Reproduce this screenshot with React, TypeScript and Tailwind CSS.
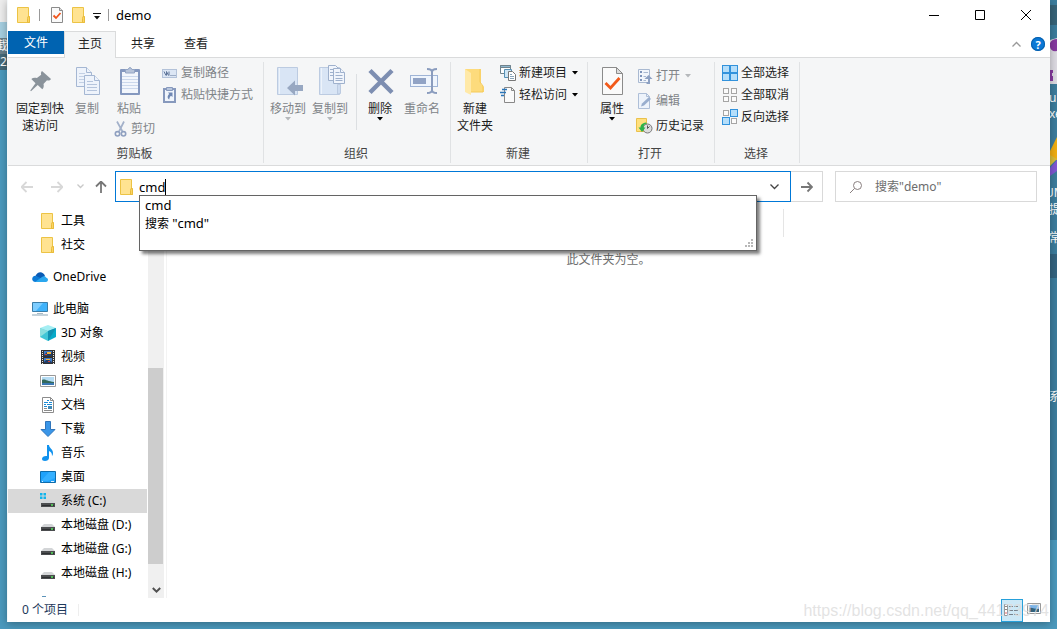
import type { ReactNode } from "react";

/* ---------- shared icons ---------- */

function Caret({ className = "fill-black" }: { className?: string }) {
  return (
    <svg width="6" height="4" viewBox="0 0 6 4" className={`shrink-0 ${className}`} aria-hidden="true">
      <path d="M0 0h6L3 3.5z" />
    </svg>
  );
}

function FolderIcon() {
  return (
    <svg width="16" height="16" viewBox="0 0 16 16" className="shrink-0" aria-hidden="true">
      <path d="M1.500.5h11v9l1 .5v5.500h-12z" fill="#ffe391" stroke="#ecc344" />
      <path d="M12 9.500h1.500v6h-2v-4z" fill="#fbd562" stroke="#e9bb3b" />
    </svg>
  );
}

function PropertiesIcon({ size = "large" }: { size?: "large" | "small" }) {
  if (size === "small") {
    return (
      <svg width="16" height="16" viewBox="0 0 16 16" aria-hidden="true">
        <path d="M2.500.5h8l3 3v12h-11z" fill="#fafafa" stroke="#8b8b8b" />
        <path d="M10.500.5v3h3" fill="#ddd" stroke="#8b8b8b" />
        <path d="m4.500 8.500 2.500 2.500 4.500-5" fill="none" stroke="#f0551c" strokeWidth="1.800" />
      </svg>
    );
  }
  return (
    <svg width="32" height="32" viewBox="0 0 32 32" aria-hidden="true">
      <path d="M6.500 1.500h14l6 6v21h-20z" fill="#fafafa" stroke="#8b8b8b" />
      <path d="M20.500 1.500v6h6z" fill="#dcdcdc" stroke="#8b8b8b" />
      <path d="m9.500 17 5 5 9-10" fill="none" stroke="#f25a1b" strokeWidth="2.800" />
    </svg>
  );
}

/* ---------- ribbon icons ---------- */

function PinIcon() {
  return (
    <svg width="32" height="32" viewBox="0 0 32 32" aria-hidden="true">
      <path d="M18 5 27 13c-1 1.500-2.500 1.800-4 1.300l-3.500 3.600c.6 2.300.2 4-1.200 5.300l-4.600-4.300L7 25.200 6.300 24.500l5.200-7.300-4.200-4.300c1.500-1.300 3.600-1.500 5.600-.9l4.300-3.200C16.700 7.300 17 6 18 5z" fill="#8a939b" />
    </svg>
  );
}

function CopyIcon() {
  return (
    <svg width="32" height="32" viewBox="0 0 32 32" aria-hidden="true">
      <g fill="#eef3fb" stroke="#a5b7d3">
        <path d="M5.500 1.500h10l5 5v14h-15z" />
        <path d="M15.500 1.500v5h5" />
        <path d="M8 7.500h6M8 10.500h10M8 13.500h10M8 16.500h6" stroke="#c3d0e4" />
        <path d="M13.500 9.500h10l5 5v14h-15z" />
        <path d="M23.500 9.500v5h5" />
        <path d="M16 15.500h6M16 18.500h10M16 21.500h10M16 24.500h10" stroke="#b5c4dc" />
      </g>
    </svg>
  );
}

function PasteIcon() {
  return (
    <svg width="32" height="32" viewBox="0 0 32 32" aria-hidden="true">
      <rect x="7" y="3" width="20" height="26" rx="1" fill="#8498bf" />
      <rect x="9" y="6" width="16" height="21" fill="#f2f6fc" />
      <path d="M12.500 7V3.500H15q2-4 4 0h2.500V7z" fill="#b7c4da" stroke="#92a4c4" />
      <path d="M9 10.500h16M9 13.500h16M9 16.500h16M9 19.500h16M9 22.500h16" stroke="#cbd8ec" />
    </svg>
  );
}

function CutIcon() {
  return (
    <svg width="14" height="16" viewBox="0 0 14 16" aria-hidden="true">
      <path d="m3 .5 5.500 10M10 .5l-5 10" stroke="#a3b1ca" strokeWidth="1.700" fill="none" />
      <circle cx="3.500" cy="12.800" r="2.200" fill="none" stroke="#8fa0c0" strokeWidth="1.600" />
      <circle cx="9.500" cy="12.800" r="2.200" fill="none" stroke="#8fa0c0" strokeWidth="1.600" />
    </svg>
  );
}

function PathIcon() {
  return (
    <svg width="16" height="16" viewBox="0 0 16 16" aria-hidden="true">
      <rect x=".5" y="4.500" width="14" height="8" fill="#dce6f4" stroke="#b3c2d9" />
      <path d="m2 6.500 2 4M4.500 6.500l2 4M4.500 6.500v4M7 6.500v4" fill="none" stroke="#5f7599" />
      <path d="M8.500 10.500h1M10.500 10.500h1M12.500 10.500h1" stroke="#5f7599" />
    </svg>
  );
}

function ShortcutIcon() {
  return (
    <svg width="16" height="16" viewBox="0 0 16 16" aria-hidden="true">
      <rect x="2" y="2" width="11" height="13" fill="#f0f5fc" stroke="#8799bd" strokeWidth="2" />
      <path d="M4.500.5h6v3h-6z" fill="#b8c6dd" stroke="#8799bd" />
      <path d="M6 5.500h4.500V10L9 8.800C7.800 9.800 7.300 11 7.300 12.500 4.800 11 5.500 8.500 7.300 7z" fill="#6f87b3" />
    </svg>
  );
}

function MoveToIcon() {
  return (
    <svg width="32" height="32" viewBox="0 0 32 32" aria-hidden="true">
      <path d="M5.500 1.500h20v27h-20z" fill="#d9e5f5" stroke="#bccbe1" />
      <path d="M7.500 2v26" stroke="#edf3fb" />
      <path d="m15 22 8-7.500V19h8v6h-8v4.500z" fill="#98a8c2" />
    </svg>
  );
}

function CopyToIcon() {
  return (
    <svg width="32" height="32" viewBox="0 0 32 32" className="overflow-visible" aria-hidden="true">
      <path d="M5.500 1.500h20v27h-20z" fill="#d9e5f5" stroke="#bccbe1" />
      <path d="M7.500 2v26" stroke="#edf3fb" />
      <path d="M23.500 28V18.500h3v9z" fill="#cedcf0" stroke="#bccbe1" />
      <g fill="#f1f5fc" stroke="#9fb1cd">
        <path d="M14.500-.5h7l3 3v12h-10z" />
        <path d="M16 3.500h4M16 6.500h4M16 9.500h4" />
        <path d="M19.500 2.500h7l4 4v11h-11z" />
        <path d="M26.500 2.500v4h4M21.500 6.500h4M21.500 9.500h7M21.500 12.500h7M21.500 14.500h7" />
      </g>
    </svg>
  );
}

function DeleteIcon() {
  return (
    <svg width="32" height="32" viewBox="0 0 32 32" aria-hidden="true">
      <path d="m6 4.500 22 22M28 4.500l-22 22" stroke="#7d8eb1" strokeWidth="4.500" />
    </svg>
  );
}

function RenameIcon() {
  return (
    <svg width="32" height="32" viewBox="0 0 32 32" aria-hidden="true">
      <rect x="4.500" y="9.500" width="27" height="11" fill="#eff5fd" stroke="#9fb4d6" />
      <rect x="7" y="12" width="13" height="6" fill="#91a3c5" />
      <path d="M21 3q5 0 5 3v18q0 3-5 3M31 3q-5 0-5 3v18q0 3 5 3" fill="none" stroke="#8a9cbe" strokeWidth="2" />
    </svg>
  );
}

function NewFolderIcon() {
  return (
    <svg width="32" height="32" viewBox="0 0 32 32" aria-hidden="true">
      <path d="M6 3h16v15l3 3v5H6z" fill="#fddb7c" />
      <path d="m6 3 6 4v22l-6-3z" fill="#ffe9a8" />
      <path d="M21 3v13l3 4v6H12" fill="none" stroke="#f5ca59" />
    </svg>
  );
}

function NewItemIcon() {
  return (
    <svg width="16" height="16" viewBox="0 0 16 16" aria-hidden="true">
      <path d="M.5.5h10v8H.5z" fill="#fff" stroke="#71838d" />
      <path d="M.5.5h10v2H.5z" fill="#8eb8d0" stroke="#71838d" />
      <path d="M4.500 4.500h7v8h-7z" fill="#cfe6f5" stroke="#5690b5" />
      <path d="M8.500 6.500h4l3 3v6h-7z" fill="#fff" stroke="#777" />
      <path d="M10 9.500h2M10 11.500h4M10 13.500h4" stroke="#88a5bb" />
    </svg>
  );
}

function EasyAccessIcon() {
  return (
    <svg width="16" height="16" viewBox="0 0 16 16" aria-hidden="true">
      <path d="M4.500.5h7l3 3v12h-10z" fill="#fafafa" stroke="#888" />
      <path d="M11.500.5v3h3" fill="none" stroke="#888" />
      <path d="M2 2.500h5M0 5.500h6M1 8.500h3" stroke="#2b76b9" strokeWidth="1.500" />
    </svg>
  );
}

function OpenIcon() {
  return (
    <svg width="16" height="16" viewBox="0 0 16 16" aria-hidden="true">
      <path d="M1.500 1.500h11v13h-11z" fill="#f2f6fc" stroke="#a9b9d1" />
      <path d="M3 3h2v2H3zM3 7h2v2H3zM3 11h2v2H3z" fill="#7f95bb" />
      <path d="M6.500 4.500H11M6.500 8.500H9M6.500 12.500H9" stroke="#a9b9d1" />
      <path d="m11.500 7 4 4H13v5H9.500v-2H11v-3H7.500z" fill="#8da1c3" />
    </svg>
  );
}

function EditIcon() {
  return (
    <svg width="16" height="16" viewBox="0 0 16 16" aria-hidden="true">
      <path d="M1.500.5h8l3 3v12h-11z" fill="#edf3fb" stroke="#aebfd8" />
      <path d="M9.500.5v3h3" fill="none" stroke="#aebfd8" />
      <path d="m4 13.500 1-3L12 4l2 2-7 6.500z" fill="#99aece" />
    </svg>
  );
}

function HistoryIcon() {
  return (
    <svg width="16" height="16" viewBox="0 0 16 16" className="overflow-visible" aria-hidden="true">
      <path d="M-.5.5h10v13h-10z" fill="#ffe07d" stroke="#eac14c" />
      <circle cx="10.500" cy="10.500" r="4.500" fill="#ddd" stroke="#777" />
      <path d="M10.500 7.500v3l2-2" fill="none" stroke="#555" />
      <path d="M9 4.500C5 5 3.500 7 3.500 9.500H1.500l3.500 4.500 3.500-4.500H6.500c0-2.500 1-3.500 3.500-4z" fill="#2bb34a" />
    </svg>
  );
}

function SelectIcon({ cells }: { cells: boolean[] }) {
  const spots = [
    [0, 0],
    [8, 0],
    [0, 8],
    [8, 8],
  ];
  return (
    <svg width="16" height="16" viewBox="0 0 16 16" aria-hidden="true">
      {spots.map(([x, y], i) =>
        cells[i] ? (
          <rect key={i} x={x + 0.5} y={y + 0.5} width="7" height="7" fill="#b5defa" stroke="#3292dc" />
        ) : (
          <rect key={i} x={x + 1.5} y={y + 1.5} width="5" height="5" fill="#fbfbfb" stroke="#a5a5a5" />
        ),
      )}
    </svg>
  );
}

/* ---------- tree icons ---------- */

function CloudIcon() {
  return (
    <svg width="16" height="16" viewBox="0 0 16 16" aria-hidden="true">
      <path d="M3.500 7C5 2.500 11 1.500 13 7l-4 4z" fill="#0a5bb5" />
      <path d="M3.500 13C-1 13-.8 7 3.500 6.800L11 10l-4 3z" fill="#0d7ad6" />
      <path d="M3 13 10 8c1.500-1.300 3.500-.8 4 .5 3 .8 2.300 4.500 0 4.500z" fill="#2aa7ee" />
    </svg>
  );
}

function ComputerIcon() {
  return (
    <svg width="16" height="16" viewBox="0 0 16 16" aria-hidden="true">
      <path d="M.5 1.500h15v9H.5z" fill="#3fb2fa" stroke="#3a7da8" />
      <path d="M1 2h10L4 10H1z" fill="#7dcdff" />
      <path d="M5 12.500h6" stroke="#a9bac5" />
      <path d="M0 14h16" stroke="#8ba6b6" />
    </svg>
  );
}

function CubeIcon() {
  return (
    <svg width="16" height="16" viewBox="0 0 16 16" aria-hidden="true">
      <path d="M0 3 8 0l8 3-8 3z" fill="#a5eef3" />
      <path d="m0 3 8 3v10l-8-4z" fill="#41c6d6" />
      <path d="m0 3 8 3-8 6z" fill="#8adfdf" />
      <path d="m16 3-8 3v10l8-4z" fill="#08aac9" />
      <path d="m16 3-8 3v10z" fill="#1192b2" />
    </svg>
  );
}

function VideoIcon() {
  return (
    <svg width="16" height="16" viewBox="0 0 16 16" aria-hidden="true">
      <path d="M1 1h14v14H1z" fill="#333" />
      <path d="M2.500 2v13M13.500 2v13" stroke="#e8e8e8" strokeDasharray="1 1" />
      <path d="M4 2h8v5H4zM4 9h8v5H4z" fill="#3f7cca" />
      <path d="m4 6 3-3 2 2 3-2v4H4zM4 13l3-3 5 3v1H4z" fill="#223d66" />
      <path d="M7 3h4v2H7zM6 10h4v1H6z" fill="#f3b33d" />
      <path d="M5 5h2v1H5zM8 12h2v1H8z" fill="#d9483b" />
    </svg>
  );
}

function PictureIcon() {
  return (
    <svg width="16" height="16" viewBox="0 0 16 16" aria-hidden="true">
      <path d="M.5 2.500h15v11H.5z" fill="#fff" stroke="#989898" />
      <path d="M2 4h12v8H2z" fill="#b5dcf4" />
      <path d="M2 7c3-1.500 5 1.500 12 2v1H2z" fill="#33695c" />
      <path d="M2 10h12v2H2z" fill="#3b78b4" />
    </svg>
  );
}

function DocumentIcon() {
  return (
    <svg width="16" height="16" viewBox="0 0 16 16" aria-hidden="true">
      <path d="M2.500.5h8l3 3v12h-11z" fill="#fff" stroke="#8c8c8c" />
      <path d="M10.500.5v3h3" fill="none" stroke="#8c8c8c" />
      <path d="M7 3.500h2M4 5.500h4M9 5.500h3M4 7.500h2M7 7.500h5M4 9.500h3" stroke="#1a8ad6" />
      <path d="M8 9h4v3H8z" fill="#3f87b5" />
      <path d="M4 11.500h3M4 13.500h8" stroke="#8c8c8c" />
    </svg>
  );
}

function DownloadIcon() {
  return (
    <svg width="16" height="16" viewBox="0 0 16 16" aria-hidden="true">
      <path d="M5.500.5h5v8h4.500L8 15.500 1 8.500h4.500z" fill="#3a96e8" stroke="#2f75bb" />
    </svg>
  );
}

function MusicIcon() {
  return (
    <svg width="16" height="16" viewBox="0 0 16 16" aria-hidden="true">
      <path d="M7 0h2c0 3 4 4 4 8 0 1.500-.5 2.500-1 3 0-3-1-4-3-5v7c0 2-2 3-4 3s-3-1-3-2.300C2 12 4.500 10.500 7 11z" fill="#1192ee" />
    </svg>
  );
}

function DesktopIcon() {
  return (
    <svg width="16" height="16" viewBox="0 0 16 16" aria-hidden="true">
      <path d="M.5 2.500h15v11H.5z" fill="#1fa2fb" stroke="#0e6cab" />
      <path d="m9 3 6 0v6L8 12H1z" fill="#35b0ff" />
      <path d="M2 12.500h1M11 12.500h3" stroke="#d9f0ff" />
    </svg>
  );
}

function DriveIcon({ system = false }: { system?: boolean }) {
  return (
    <svg width="16" height="16" viewBox="0 0 16 16" aria-hidden="true">
      {system && <path d="M0 0h2.500v2.500H0zM3.500 0H6v2.500H3.500zM0 3.500h2.500V6H0zM3.500 3.500H6V6H3.500z" fill="#10b4ec" />}
      <path d="M4 7h8l3 3H1z" fill="#d3d5d7" />
      <path d="M1 10h14v4H1z" fill="#4b4d4f" />
      <path d="M2 12h12v1H2z" fill="#2e3032" />
      <path d="M11 12h2" stroke="#56e35c" strokeWidth="1.500" />
    </svg>
  );
}

/* ---------- ribbon building blocks ---------- */

function RibbonGroup({ label, width, children }: { label: string; width: string; children: ReactNode }) {
  return (
    <section aria-label={label} className={`flex shrink-0 flex-col pt-1 ${width}`}>
      <div className="flex flex-1 flex-col border-r border-[#e0e2e4]">
        <div className="flex h-[83px] items-start">{children}</div>
        <div className="pr-0.5 text-center leading-[18px] text-[#444]">{label}</div>
      </div>
    </section>
  );
}

type BigProps = { icon: ReactNode; lines: string[]; width: string; muted?: boolean; menu?: boolean };

function BigButton({ icon, lines, width, muted, menu }: BigProps) {
  return (
    <button
      type="button"
      className={`flex shrink-0 flex-col items-center pt-1 leading-[17px] whitespace-nowrap ${width} ${muted ? "text-[#808488]" : "text-[#1c1c1c]"}`}
    >
      {icon}
      <span className="pt-0.5">
        {lines.map((line) => (
          <span key={line} className="block">
            {line}
          </span>
        ))}
      </span>
      {menu && <Caret className={muted ? "fill-[#b5b8bb]" : "fill-black"} />}
    </button>
  );
}

type SmallProps = { icon: ReactNode; label: string; muted?: boolean; menu?: boolean; tall?: boolean };

function SmallButton({ icon, label, muted, menu, tall }: SmallProps) {
  return (
    <button
      type="button"
      className={`flex items-center gap-[3px] whitespace-nowrap ${tall ? "h-[25px]" : "h-[22px]"} ${muted ? "text-[#808488]" : "text-[#1c1c1c]"}`}
    >
      {icon}
      <span>{label}</span>
      {menu && (
        <span className="pl-0.5">
          <Caret className={muted ? "fill-[#b5b8bb]" : "fill-black"} />
        </span>
      )}
    </button>
  );
}

function Ribbon() {
  return (
    <div className="flex h-[109px] border-y border-[#dadbdc] bg-[#f5f6f7] pb-0.5">
      <RibbonGroup label="剪贴板" width="w-64">
        <BigButton icon={<PinIcon />} lines={["固定到快", "速访问"]} width="ml-1.5 w-[52px]" />
        <BigButton icon={<CopyIcon />} lines={["复制"]} width="w-[42px]" muted />
        <div className="flex w-12 flex-col">
          <BigButton icon={<PasteIcon />} lines={["粘贴"]} width="w-[42px]" muted />
          <div className="pt-px pl-1.5">
            <SmallButton icon={<CutIcon />} label="剪切" muted />
          </div>
        </div>
        <div className="flex flex-col pl-1.5">
          <SmallButton icon={<PathIcon />} label="复制路径" muted />
          <SmallButton icon={<ShortcutIcon />} label="粘贴快捷方式" muted />
        </div>
      </RibbonGroup>
      <RibbonGroup label="组织" width="w-[187px]">
        <BigButton icon={<MoveToIcon />} lines={["移动到"]} width="ml-[3px] w-[42px]" muted menu />
        <BigButton icon={<CopyToIcon />} lines={["复制到"]} width="w-[42px]" muted menu />
        <div className="mt-3 mr-0.5 ml-[5px] h-14 w-px bg-[#dcdfe2]" />
        <BigButton icon={<DeleteIcon />} lines={["删除"]} width="w-[42px]" menu />
        <BigButton icon={<RenameIcon />} lines={["重命名"]} width="w-[42px]" muted />
      </RibbonGroup>
      <RibbonGroup label="新建" width="w-[137px]">
        <BigButton icon={<NewFolderIcon />} lines={["新建", "文件夹"]} width="w-12" />
        <div className="flex flex-col pl-px">
          <SmallButton icon={<NewItemIcon />} label="新建项目" menu />
          <SmallButton icon={<EasyAccessIcon />} label="轻松访问" menu />
        </div>
      </RibbonGroup>
      <RibbonGroup label="打开" width="w-[127px]">
        <BigButton icon={<PropertiesIcon />} lines={["属性"]} width="w-12" menu />
        <div className="flex flex-col pt-px pl-px">
          <SmallButton icon={<OpenIcon />} label="打开" muted menu tall />
          <SmallButton icon={<EditIcon />} label="编辑" muted tall />
          <SmallButton icon={<HistoryIcon />} label="历史记录" tall />
        </div>
      </RibbonGroup>
      <RibbonGroup label="选择" width="w-[85px]">
        <div className="flex flex-col pl-[7px]">
          <SmallButton icon={<SelectIcon cells={[true, true, true, true]} />} label="全部选择" />
          <SmallButton icon={<SelectIcon cells={[false, false, false, false]} />} label="全部取消" />
          <SmallButton icon={<SelectIcon cells={[false, true, true, false]} />} label="反向选择" />
        </div>
      </RibbonGroup>
    </div>
  );
}

/* ---------- window chrome ---------- */

function TitleBar() {
  return (
    <header className="flex h-[31px] items-start">
      <div className="flex h-[30px] items-center pl-2">
        <FolderIcon />
        <span className="ml-[7px] h-3 w-px bg-[#999]" />
        <button type="button" aria-label="属性" className="ml-[9px]">
          <PropertiesIcon size="small" />
        </button>
        <button type="button" aria-label="新建文件夹" className="ml-1.5">
          <FolderIcon />
        </button>
        <button type="button" aria-label="自定义快速访问工具栏" className="ml-1.5 pt-0.5">
          <svg width="8" height="7" viewBox="0 0 8 7" aria-hidden="true">
            <path d="M0 0h8v1H0zM1 3h6L4 6.500z" fill="#111" />
          </svg>
        </button>
        <span className="ml-[7px] h-3 w-px bg-[#999]" />
        <h1 className="ml-[7px] text-[13px]">demo</h1>
      </div>
      <div className="ml-auto flex pr-px">
        <button type="button" aria-label="最小化" className="flex h-[30px] w-[46px] items-center justify-center">
          <svg width="10" height="10" viewBox="0 0 10 10" aria-hidden="true">
            <path d="M0 5.500h10" stroke="#000" />
          </svg>
        </button>
        <button type="button" aria-label="最大化" className="flex h-[30px] w-[46px] items-center justify-center">
          <svg width="10" height="10" viewBox="0 0 10 10" aria-hidden="true">
            <path d="M.5.5h9v9h-9z" fill="none" stroke="#000" />
          </svg>
        </button>
        <button type="button" aria-label="关闭" className="flex h-[30px] w-[46px] items-center justify-center">
          <svg width="10" height="10" viewBox="0 0 10 10" aria-hidden="true">
            <path d="m0 0 10 10M10 0 0 10" stroke="#000" />
          </svg>
        </button>
      </div>
    </header>
  );
}

function TabBar() {
  return (
    <nav className="flex h-[26px]">
      <button type="button" className="mb-[3px] w-14 bg-[#0063b1] text-white">
        文件
      </button>
      <button
        type="button"
        className="relative -mb-px w-[52px] border border-b-0 border-[#dadbdc] bg-[#f5f6f7] pb-0.5 text-[#222]"
      >
        主页
      </button>
      <button type="button" className="w-[54px] pb-px text-[#222]">
        共享
      </button>
      <button type="button" className="w-[52px] pb-px text-[#222]">
        查看
      </button>
      <div className="ml-auto flex items-center gap-[10px] pr-[5px]">
        <button type="button" aria-label="折叠功能区">
          <svg width="9" height="6" viewBox="0 0 9 6" aria-hidden="true">
            <path d="m.5 5.500 4-4 4 4" fill="none" stroke="#999" strokeWidth="1.300" />
          </svg>
        </button>
        <button
          type="button"
          aria-label="帮助"
          className="flex size-[14px] items-center justify-center rounded-full bg-[#0a78d6] text-[11px] leading-none font-bold text-white ring-1 ring-[#075fac] ring-inset"
        >
          ?
        </button>
      </div>
    </nav>
  );
}

function NavArrow({ kind }: { kind: "back" | "forward" | "up" }) {
  const turn = kind === "back" ? "rotate-180" : kind === "up" ? "-rotate-90" : "";
  const tone = kind === "up" ? "stroke-[#777]" : "stroke-[#d8d8d8]";
  return (
    <svg width="12" height="12" viewBox="0 0 12 12" className={`${turn} ${tone}`} fill="none" strokeWidth="1.800" aria-hidden="true">
      <path d="M0 6h11M6.500 1l5 5-5 5" />
    </svg>
  );
}

function AddressRow() {
  return (
    <div className="flex h-[41px] items-center gap-3 pr-[13px]">
      <div className="flex flex-1">
        <div className="flex w-[107px] shrink-0 items-center pl-[13px]">
          <button type="button" aria-label="后退">
            <NavArrow kind="back" />
          </button>
          <button type="button" aria-label="前进" className="ml-[18px]">
            <NavArrow kind="forward" />
          </button>
          <button type="button" aria-label="最近浏览的位置" className="ml-[14px]">
            <svg width="7" height="5" viewBox="0 0 7 5" aria-hidden="true">
              <path d="m.5.5 3 3 3-3" fill="none" stroke="#c8c8c8" strokeWidth="1.300" />
            </svg>
          </button>
          <button type="button" aria-label="上移" className="ml-[11px]">
            <NavArrow kind="up" />
          </button>
        </div>
        <div className="relative flex h-[31px] flex-1 items-center border border-[#0078d7] bg-white pl-[3px]">
          <FolderIcon />
          <label htmlFor="address" className="sr-only">
            地址
          </label>
          <input id="address" defaultValue="cmd" className="ml-1 field-sizing-content text-[13px] outline-none" />
          <span className="h-4 w-px bg-black" />
          <button type="button" aria-label="历史位置" className="ml-auto pr-[11px]">
            <svg width="9" height="6" viewBox="0 0 9 6" aria-hidden="true">
              <path d="m.5.5 4 4 4-4" fill="none" stroke="#444" strokeWidth="1.300" />
            </svg>
          </button>
          <ul className="absolute top-[23px] right-[33px] left-[23px] z-10 h-14 border border-[#646464] bg-white pl-[5px] leading-[18px] shadow-[3px_3px_3px_rgba(0,0,0,0.5)]">
            <li className="text-[13px]">cmd</li>
            <li>
              搜索 <span className="text-[13px]">"cmd"</span>
            </li>
            <svg width="9" height="9" viewBox="0 0 9 9" className="absolute right-0.5 bottom-0.5" aria-hidden="true">
              <path d="M6 0h2v2H6zM3 3h2v2H3zM6 3h2v2H6zM0 6h2v2H0zM3 6h2v2H3zM6 6h2v2H6z" fill="#b8b8b8" />
            </svg>
          </ul>
        </div>
        <button
          type="button"
          aria-label="转到"
          className="flex h-[31px] w-8 items-center justify-center border border-l-0 border-[#d9d9d9]"
        >
          <svg width="12" height="12" viewBox="0 0 12 12" fill="none" stroke="#777" strokeWidth="1.800" aria-hidden="true">
            <path d="M0 6h11M6.500 1.500l4.500 4.500-4.500 4.500" />
          </svg>
        </button>
      </div>
      <div className="flex h-[31px] w-[202px] items-center border border-[#d9d9d9] pl-[13px]">
        <svg width="14" height="14" viewBox="0 0 14 14" className="shrink-0" fill="none" stroke="#8a8080" aria-hidden="true">
          <circle cx="8.500" cy="5.500" r="4" />
          <path d="M5.500 8.500 1 13" />
        </svg>
        <label htmlFor="search" className="sr-only">
          搜索
        </label>
        <input
          id="search"
          placeholder={'搜索"demo"'}
          className="ml-3 w-full min-w-0 text-[12px] outline-none placeholder:text-[#6d6d6d]"
        />
      </div>
    </div>
  );
}

/* ---------- body ---------- */

type TreeNode = { label: string; icon: ReactNode; root?: boolean; selected?: boolean };

const tree: TreeNode[] = [
  { label: "工具", icon: <FolderIcon /> },
  { label: "社交", icon: <FolderIcon /> },
  { label: "OneDrive", icon: <CloudIcon />, root: true },
  { label: "此电脑", icon: <ComputerIcon />, root: true },
  { label: "3D 对象", icon: <CubeIcon /> },
  { label: "视频", icon: <VideoIcon /> },
  { label: "图片", icon: <PictureIcon /> },
  { label: "文档", icon: <DocumentIcon /> },
  { label: "下载", icon: <DownloadIcon /> },
  { label: "音乐", icon: <MusicIcon /> },
  { label: "桌面", icon: <DesktopIcon /> },
  { label: "系统 (C:)", icon: <DriveIcon system />, selected: true },
  { label: "本地磁盘 (D:)", icon: <DriveIcon /> },
  { label: "本地磁盘 (G:)", icon: <DriveIcon /> },
  { label: "本地磁盘 (H:)", icon: <DriveIcon /> },
];

function Sidebar() {
  return (
    <aside className="flex w-[159px] shrink-0 border-r border-[#f3f3f3]">
      <ul className="w-[139px] pt-0.5">
        {tree.map((node) => (
          <li key={node.label} className={node.root ? "pt-2" : ""}>
            <button
              type="button"
              className={`flex h-6 w-full items-center gap-[5px] whitespace-nowrap ${node.root ? "pl-6" : "pl-8"} ${node.selected ? "bg-[#d9d9d9]" : ""}`}
            >
              {node.icon}
              <span>{node.label}</span>
            </button>
          </li>
        ))}
        <li className="pt-[11px] pl-8">
          <div className="ml-0.5 h-px w-1 bg-[#5b93b9]" />
        </li>
      </ul>
      <div className="ml-px flex w-4 flex-col bg-[#f0f0f0]">
        <div className="flex-[161]" />
        <div className="mr-px flex-[196] bg-[#cdcdcd]" />
        <div className="flex flex-[34] items-center justify-center">
          <svg width="9" height="25" viewBox="0 0 9 25" aria-hidden="true">
            <path d="m.8 19 3.700 3.700L8.200 19" fill="none" stroke="#505050" strokeWidth="2" />
          </svg>
        </div>
      </div>
    </aside>
  );
}

function StatusBar() {
  return (
    <footer className="flex h-6 items-center pl-[14px] text-[#1e395b]">
      <span>0 个项目</span>
      <span className="ml-[10px] h-3 w-px bg-[#eee]" />
      <div className="ml-auto flex items-center pr-[9px]">
        <button
          type="button"
          aria-label="详细信息"
          className="flex h-[23px] w-[22px] items-center justify-center border border-[#26a0da] bg-[#cce8f6]"
        >
          <svg width="16" height="12" viewBox="0 0 16 12" aria-hidden="true">
            <path d="M.5.500h3v11h-3z" fill="#fff" stroke="#999" />
            <path d="M1 2.500h2M1 5.500h2" stroke="#888" />
            <path d="M1.500 9h1" stroke="#d33" strokeWidth="1.500" />
            <path d="M5 2.500h4M10 2.500h4M5 6.500h4M10 6.500h4M5 10.500h4M10 10.500h4" stroke="#78838c" />
          </svg>
        </button>
        <button type="button" aria-label="大图标" className="ml-1 pb-1">
          <svg width="14" height="11" viewBox="0 0 14 11" aria-hidden="true">
            <path d="M.5.5h13v10H.5z" fill="#fff" stroke="#999" />
            <path d="M2 2h10v4H2z" fill="#7db4e8" />
            <path d="M2 5c3-1 5 1 10 1v3H2z" fill="#34617a" />
          </svg>
        </button>
      </div>
    </footer>
  );
}

/* ---------- desktop behind the window ---------- */

function Desktop() {
  return (
    <div className="absolute inset-0 overflow-hidden text-[12px] text-white" aria-hidden="true">
      <div className="absolute top-0 left-0 h-[22px] w-2 bg-[#ededed]" />
      <div className="absolute top-[22px] left-0 h-12 w-2 bg-[#a5cee0]" />
      <span className="absolute top-[38px] -left-1 bg-[#697f89] leading-4">截</span>
      <span className="absolute top-[54px] left-0 w-2 bg-[#446878] leading-4">2</span>
      <div className="absolute top-0 right-0 h-[540px] w-2 bg-[#3c7d9d]" />
      <div className="absolute top-[5px] right-0 h-5 w-2 bg-[#376479]" />
      <div className="absolute top-[254px] right-0 h-6 w-2 bg-[#346480]" />
      <svg width="8" height="150" viewBox="0 0 8 150" className="absolute top-9 right-0">
        <path d="M1 4l7-2v46H1z" fill="#dedbe3" />
        <path d="M1 7q2-4 7-4v12q-6 1-7-4zM1 34h3v3H3v3h1v5H1z" fill="#873aa0" />
        <path d="M8 101 1 115v9h7z" fill="#f0ae12" />
        <path d="m1 119 7 4-7 7z" fill="#d8bd3b" />
        <path d="M8 124 1 132v8l7-5z" fill="#8057d3" />
      </svg>
      <span className="absolute top-[89px] left-full -ml-2 whitespace-nowrap">ub</span>
      <span className="absolute top-[105px] left-full -ml-2 whitespace-nowrap">xe</span>
      <span className="absolute top-[184px] left-full -ml-3 whitespace-nowrap">UM</span>
      <span className="absolute top-[201px] left-full -ml-2 whitespace-nowrap">提</span>
      <span className="absolute top-[229px] left-full -ml-2 whitespace-nowrap">常</span>
      <span className="absolute top-[388px] left-full -ml-2 whitespace-nowrap">系</span>
    </div>
  );
}

export default function App() {
  return (
    <div className="relative flex min-h-screen bg-[#4b99bd] pr-[7px] pb-[7px] pl-[7px] font-['Noto_Sans','Noto_Sans_CJK_SC',sans-serif] text-[12px] leading-[18px] text-black">
      <Desktop />
      <main className="relative flex min-w-0 flex-1 flex-col border-l border-[#f4f8fa] bg-white shadow-[0_2px_8px_rgba(0,0,0,0.3)]">
        <TitleBar />
        <TabBar />
        <Ribbon />
        <AddressRow />
        <div className="flex flex-1">
          <Sidebar />
          <section className="min-w-0 flex-1" aria-label="文件列表">
            <div className="flex h-[30px] pt-0.5">
              <div className="w-[617px] border-r border-[#e5e5e5]" />
            </div>
            <p className="pt-3.5 text-center text-[#6d6d6d]">此文件夹为空。</p>
          </section>
        </div>
        <StatusBar />
      </main>
      <div className="pointer-events-none absolute right-2 bottom-2 font-['Liberation_Sans',sans-serif] text-[16px] leading-5 text-[#dcdcdc]/80">
        https://blog.csdn.net/qq_44173974
      </div>
    </div>
  );
}
